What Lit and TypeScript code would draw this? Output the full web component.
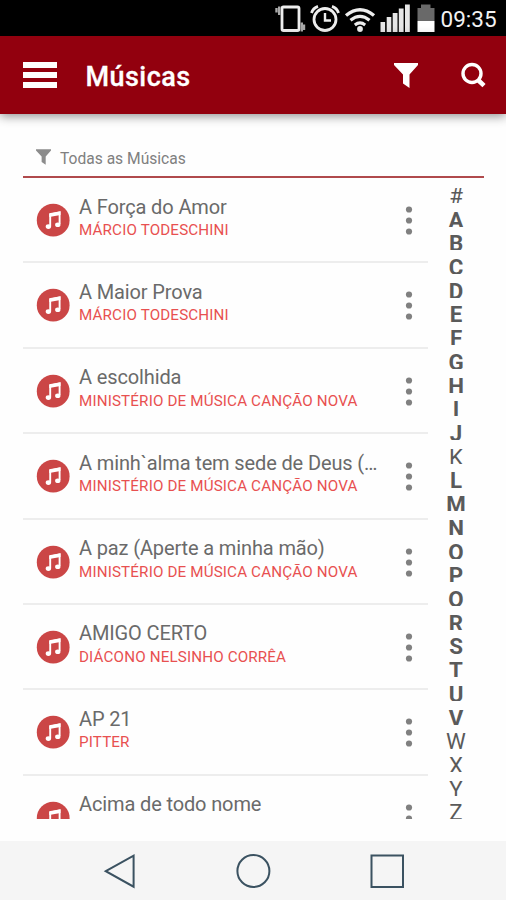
import { LitElement, html, css, svg } from "lit";
import { customElement, property } from "lit/decorators.js";
import { classMap } from "lit/directives/class-map.js";

interface Song {
  title: string;
  artist: string;
}

const SONGS: Song[] = [
  { title: "A Força do Amor", artist: "MÁRCIO TODESCHINI" },
  { title: "A Maior Prova", artist: "MÁRCIO TODESCHINI" },
  { title: "A escolhida", artist: "MINISTÉRIO DE MÚSICA CANÇÃO NOVA" },
  { title: "A minh`alma tem sede de Deus (…", artist: "MINISTÉRIO DE MÚSICA CANÇÃO NOVA" },
  { title: "A paz (Aperte a minha mão)", artist: "MINISTÉRIO DE MÚSICA CANÇÃO NOVA" },
  { title: "AMIGO CERTO", artist: "DIÁCONO NELSINHO CORRÊA" },
  { title: "AP 21", artist: "PITTER" },
  { title: "Acima de todo nome", artist: "" },
];

const INDEX = "#ABCDEFGHIJKLMNOPQRSTUVWXYZ".split("");
const EMPTY_LETTERS = "#KWXYZ";

const funnel = svg`<path d="M0 0H24V2L15.5 11.5V25L9 20.5V11.5L0 2Z" fill="currentColor"/>`;

@customElement("status-bar")
class StatusBar extends LitElement {
  static styles = css`
    :host {
      display: flex;
      justify-content: flex-end;
      align-items: flex-start;
      height: 36px;
      background: #000;
      color: #f2f2f2;
      font: 400 22.5px/36px Roboto, sans-serif;
    }
    svg { display: block; flex: none; }
    .time { width: 65.5px; padding-left: 0.5px; height: 36px; line-height: 38px; white-space: nowrap; }
  `;
  render() {
    return html`
      <svg width="174" height="36" viewBox="266 0 174 36">
        <rect x="282" y="7" width="17" height="23.5" rx="1.5" fill="none" stroke="#eee" stroke-width="2.8" />
        <path d="M279.2 6.5V15M276.5 8V12.5M301.8 22.5V31.5M304 24.5V30" stroke="#aaa" stroke-width="2.4" />
        <g fill="none" stroke="#eee">
          <circle cx="325" cy="19.5" r="11" stroke-width="2.8" />
          <path d="M325 13V20.5H331" stroke-width="2.4" />
          <path d="M311.5 13Q313 8 318 6.3M338.5 13Q337 8 332 6.3" stroke-width="2.8" />
          <path d="M346 15.5Q360 4 374 15.5" stroke-width="3.4" />
          <path d="M350.5 20.3Q360 12.5 369.5 20.3" stroke-width="3.2" />
          <path d="M354.8 25Q360 20.8 365.2 25" stroke-width="3" />
        </g>
        <circle cx="360" cy="29" r="2.9" fill="#eee" />
        <g fill="#e6e6e6">
          <rect x="380.5" y="22" width="4.6" height="10" />
          <rect x="386.7" y="17" width="4.6" height="15" />
          <rect x="392.7" y="13" width="4.8" height="19" />
          <rect x="398.8" y="8.5" width="4.8" height="23.5" />
          <rect x="405" y="4.5" width="4.8" height="27.5" />
        </g>
        <path d="M417.5 21V8H421V4.5H430.5V8H434.5V21Z" fill="#696969" />
        <rect x="417.5" y="21" width="17" height="11" fill="#fff" />
      </svg>
      <span class="time">09:35</span>
    `;
  }
}

@customElement("app-header")
class AppHeader extends LitElement {
  static styles = css`
    :host {
      display: flex;
      align-items: center;
      height: 78px;
      box-sizing: border-box;
      padding: 0 20px 0 23px;
      background: #92000e;
      color: #fff;
      box-shadow: 0 2px 10px rgba(0, 0, 0, 0.45);
    }
    .menu { display: grid; gap: 4px; width: 34px; margin-right: 28.5px; }
    .bar { height: 6px; background: #fff; }
    .title {
      flex: 1;
      font: 500 27px/32px Roboto, sans-serif;
      letter-spacing: 0.45px;
      padding-top: 3px;
      -webkit-text-stroke: 0.3px #fff;
    }
    .filter { margin-right: 43px; }
    svg { display: block; }
  `;
  render() {
    return html`
      <div class="menu"><div class="bar"></div><div class="bar"></div><div class="bar"></div></div>
      <div class="title">Músicas</div>
      <svg class="filter" width="24" height="25" viewBox="0 0 24 25">${funnel}</svg>
      <svg width="25" height="26" viewBox="0 0 25 26" fill="none" stroke="#fff">
        <circle cx="11" cy="11.5" r="9" stroke-width="3.4" />
        <path d="M16.5 17.5L23 23.7" stroke-width="4.6" />
      </svg>
    `;
  }
}

@customElement("song-row")
class SongRow extends LitElement {
  @property({ attribute: false }) song!: Song;
  static styles = css`
    :host {
      display: flex;
      box-sizing: border-box;
      height: 85.4px;
      flex: none;
      padding: 16.5px 15px 0 13px;
      border-bottom: 2px solid #ededed;
      font-family: Roboto, sans-serif;
    }
    svg { display: block; flex: none; }
    .disc { margin: 8.5px 9px 0 0; }
    .text { flex: 1; min-width: 0; white-space: nowrap; }
    .title {
      font-size: 20px;
      line-height: 25px;
      color: #6a6a6a;
      letter-spacing: -0.13px;
    }
    .artist { font-size: 15.2px; line-height: 20px; padding-top: 0.6px; color: #e85050; letter-spacing: 0.15px; }
    .more { margin: 10.5px 0 0 9px; }
  `;
  render() {
    return html`
      <svg class="disc" width="34" height="34" viewBox="0 0 34 34">
        <circle cx="17.2" cy="17.2" r="16.4" fill="#cb4646" />
        <path d="M14.2 23V11.5L23.6 9.5V21" fill="none" stroke="#fff" stroke-width="1.9" />
        <path d="M13.3 10.2L24.5 8.2V12L13.3 14Z" fill="#fff" />
        <ellipse cx="12.4" cy="23.6" rx="2.7" ry="2.3" fill="#fff" />
        <ellipse cx="21.8" cy="21.7" rx="2.7" ry="2.3" fill="#fff" />
      </svg>
      <div class="text">
        <div class="title">${this.song.title}</div>
        <div class="artist">${this.song.artist}</div>
      </div>
      <svg class="more" width="8" height="32" viewBox="0 0 8 32" fill="#808080">
        <circle cx="4" cy="4.5" r="3.1" /><circle cx="4" cy="15.5" r="3.1" /><circle cx="4" cy="26.5" r="3.1" />
      </svg>
    `;
  }
}

@customElement("alpha-index")
class AlphaIndex extends LitElement {
  static styles = css`
    :host {
      display: block;
      width: 56px;
      padding-top: 6.8px;
      font: 700 22.3px/24px Roboto, sans-serif;
      color: #5a5a5a;
      text-align: center;
    }
    .cell { height: 23.72px; display: flow-root; }
    .letter { height: 18.2px; line-height: 22px; overflow: hidden; }
    .letter.empty { font-weight: 400; }
  `;
  render() {
    return INDEX.map(
      (c) => html`<div class="cell">
        <div class=${classMap({ letter: true, empty: EMPTY_LETTERS.includes(c) })}>${c}</div>
      </div>`
    );
  }
}

@customElement("nav-bar")
class NavBar extends LitElement {
  static styles = css`
    :host {
      display: flex;
      align-items: center;
      justify-content: center;
      gap: 98px;
      height: 59px;
      background: #f5f5f5;
    }
    svg { display: block; fill: none; stroke: #3b5261; stroke-width: 2; }
  `;
  render() {
    return html`
      <svg width="36" height="36" viewBox="0 0 36 36"><path d="M4.8 18.2L32.6 2.7V33.7Z" /></svg>
      <svg width="36" height="36" viewBox="0 0 36 36"><circle cx="18.4" cy="18" r="16" /></svg>
      <svg width="36" height="36" viewBox="0 0 36 36"><rect x="2.5" y="2.5" width="31.5" height="31.5" /></svg>
    `;
  }
}

@customElement("app-root")
class AppRoot extends LitElement {
  static styles = css`
    :host {
      display: flex;
      flex-direction: column;
      height: 900px;
      overflow: hidden;
      background: #fefefe;
      font-family: Roboto, sans-serif;
    }
    status-bar, app-header, nav-bar { flex: none; }
    .filter {
      display: flex;
      align-items: flex-start;
      flex: none;
      box-sizing: border-box;
      height: 64px;
      margin: 0 22px 0 23px;
      padding: 34.6px 0 0 13px;
      border-bottom: 2px solid #b04a4c;
      color: #8c8c8c;
      font-size: 15.6px;
      line-height: 20px;
    }
    .funnel { display: block; margin-right: 9px; }
    .label { color: #808080; }
    .body { display: flex; height: 641px; overflow: hidden; padding-left: 23px; flex: none; }
    .list { display: flex; flex-direction: column; width: 405px; flex: none; }
    nav-bar { margin-top: auto; }
  `;
  render() {
    return html`
      <status-bar></status-bar>
      <app-header></app-header>
      <div class="filter">
        <svg class="funnel" width="15" height="16" viewBox="0 0 24 25">${funnel}</svg>
        <span class="label">Todas as Músicas</span>
      </div>
      <div class="body">
        <div class="list">${SONGS.map((s) => html`<song-row .song=${s}></song-row>`)}</div>
        <alpha-index></alpha-index>
      </div>
      <nav-bar></nav-bar>
    `;
  }
}
